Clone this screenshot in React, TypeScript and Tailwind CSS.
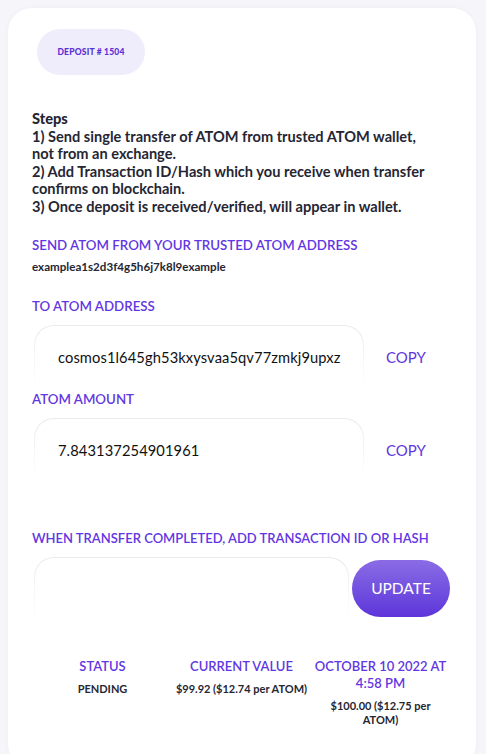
import React from "react";

const font = { fontFamily: "Lato, 'Open Sans', sans-serif" };

function Field({ value, width }: { value: string; width: string }) {
  return (
    <div className={`${width} h-[64px] rounded-t-[20px] bg-gradient-to-b from-[#e9e9ee] via-[#f6f6f8] to-white px-px pt-px`}>
      <div className="h-full w-full rounded-t-[19px] bg-white flex items-center pl-[23px] text-[14.7px] text-[#111] tracking-[0.1px]">
        {value}
      </div>
    </div>
  );
}

export default function App() {
  return (
    <div className="min-h-[754px] bg-[#f5f5fa] pt-[8px] px-[8px]" style={font}>
      <div className="w-[468px] min-h-[760px] rounded-[24px] bg-white shadow-[0_0_6px_rgba(0,0,0,0.03)] px-6 pt-[21px]">
        <div className="ml-[5px] w-[108px] h-[46px] rounded-full bg-[#efedfb] flex items-center justify-center text-[8.5px] font-black text-[#5b30d6] tracking-[0.2px]">
          DEPOSIT # 1504
        </div>

        <div className="mt-[35px] w-[406px] text-[14.6px] leading-[17.5px] font-bold text-[#262633]">
          <div className="font-black">Steps</div>
          <div>1) Send single transfer of ATOM from trusted ATOM wallet, not from an exchange.</div>
          <div>2) Add Transaction ID/Hash which you receive when transfer confirms on blockchain.</div>
          <div>3) Once deposit is received/verified, will appear in wallet.</div>
        </div>

        <div className="mt-[22px] text-[13.3px] leading-[16px] font-semibold text-[#6236e2]">
          SEND ATOM FROM YOUR TRUSTED ATOM ADDRESS
        </div>
        <div className="mt-[7px] text-[11.6px] leading-[14px] font-bold text-[#262633]">
          examplea1s2d3f4g5h6j7k8l9example
        </div>

        <div className="mt-[24px] text-[13.3px] leading-[16px] font-semibold text-[#6236e2]">
          TO ATOM ADDRESS
        </div>
        <div className="mt-[11px] ml-[2px] flex items-center">
          <Field width="w-[330px]" value="cosmos1l645gh53kxysvaa5qv77zmkj9upxz" />
          <div className="ml-[22px] text-[15px] text-[#6236e2]">COPY</div>
        </div>

        <div className="mt-[2px] text-[13.3px] leading-[16px] font-semibold text-[#6236e2]">
          ATOM AMOUNT
        </div>
        <div className="mt-[11px] ml-[2px] flex items-center">
          <Field width="w-[330px]" value="7.843137254901961" />
          <div className="ml-[22px] text-[15px] text-[#6236e2]">COPY</div>
        </div>

        <div className="mt-[48px] text-[13px] leading-[16px] font-semibold text-[#6236e2]">
          WHEN TRANSFER COMPLETED, ADD TRANSACTION ID OR HASH
        </div>
        <div className="mt-[11px] ml-[2px] flex items-start">
          <Field width="w-[315px]" value="" />
          <div className="ml-[3px] mt-[3px] w-[98px] h-[57px] rounded-full bg-gradient-to-b from-[#8b6be4] to-[#5e33da] flex items-center justify-center text-white text-[15.5px]">
            UPDATE
          </div>
        </div>

        <div className="mt-[37px] ml-[1px] grid grid-cols-3 w-[417px] text-center">
          <div>
            <div className="text-[13px] leading-[17px] font-semibold text-[#6236e2]">STATUS</div>
            <div className="mt-[7px] text-[11px] leading-[14px] font-bold text-[#262633]">PENDING</div>
          </div>
          <div>
            <div className="text-[13px] leading-[17px] font-semibold text-[#6236e2]">CURRENT VALUE</div>
            <div className="mt-[7px] text-[11px] leading-[14px] font-bold text-[#262633]">$99.92 ($12.74 per ATOM)</div>
          </div>
          <div>
            <div className="text-[13px] leading-[17px] font-semibold text-[#6236e2] px-[2px]">OCTOBER 10 2022 AT 4:58 PM</div>
            <div className="mt-[7px] text-[11px] leading-[14px] font-bold text-[#262633] px-[16px]">$100.00 ($12.75 per ATOM)</div>
          </div>
        </div>
      </div>
    </div>
  );
}
